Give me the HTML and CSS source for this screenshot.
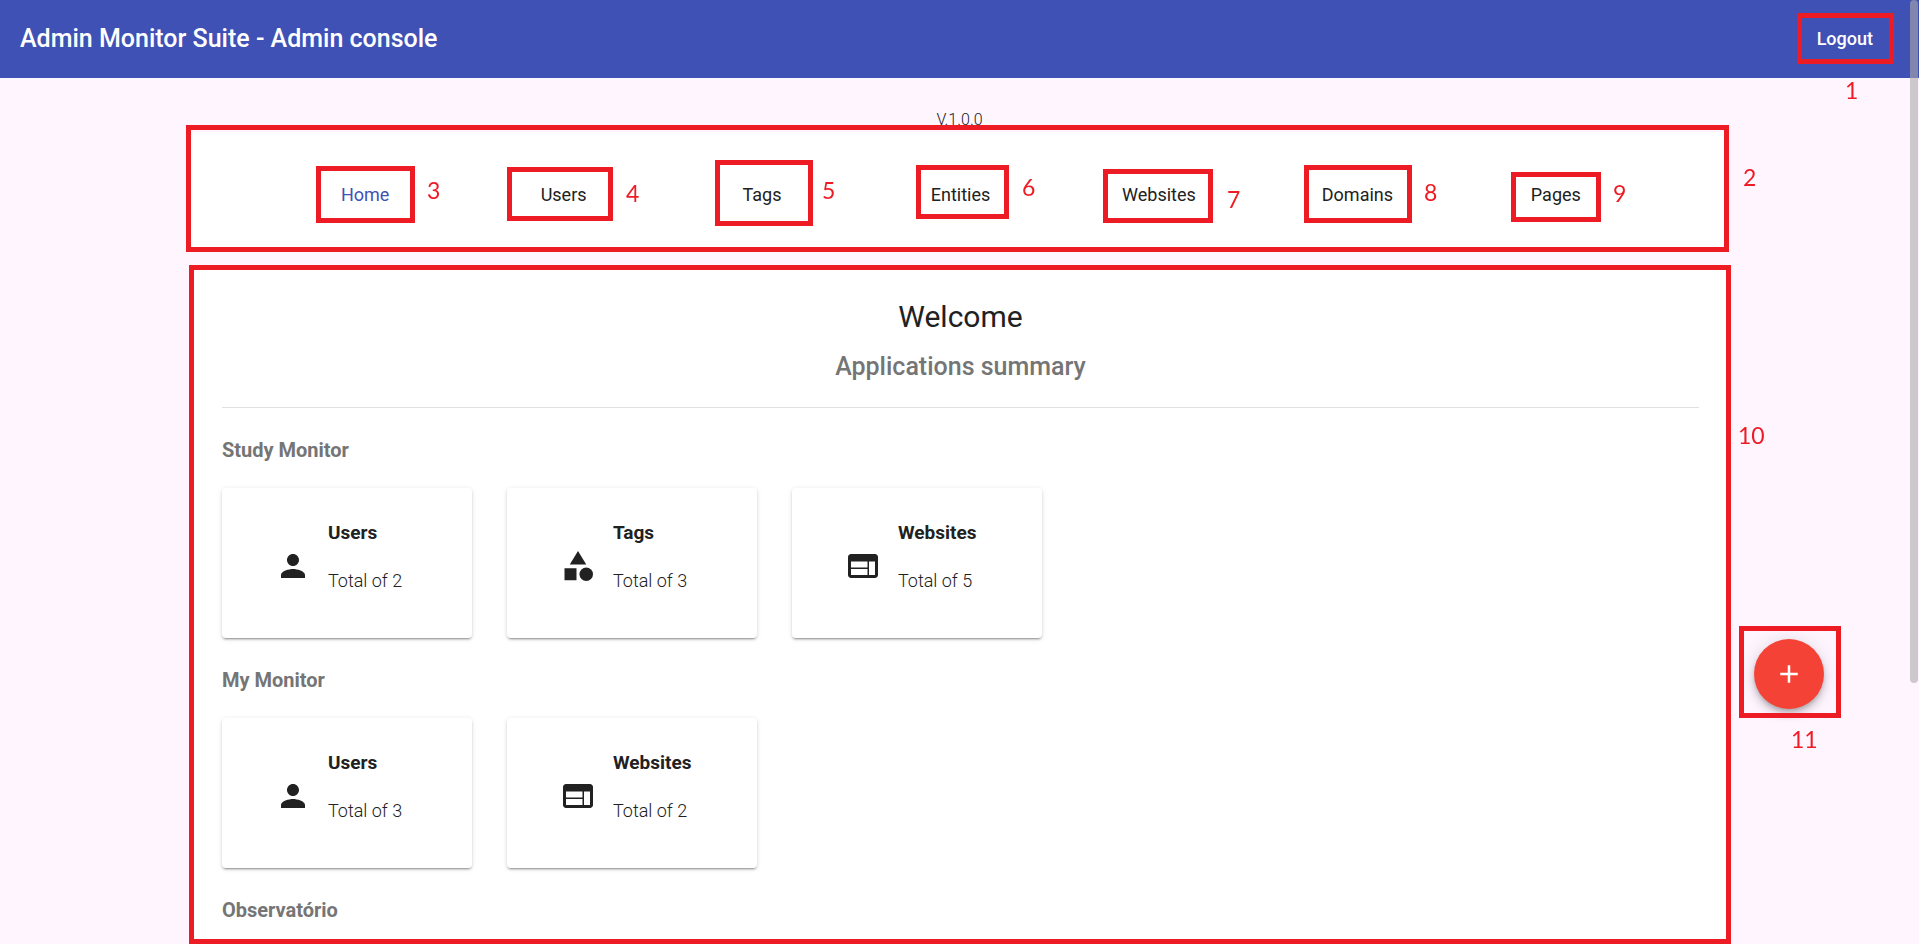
FILE: index.html
```
<!DOCTYPE html>
<html lang="en">
<head>
<meta charset="utf-8">
<meta name="viewport" content="width=device-width, initial-scale=1">
<title>Admin Monitor Suite - Admin console</title>
<link rel="stylesheet" href="styles.css">
</head>
<body>
<svg class="sprite" aria-hidden="true">
  <symbol id="person" viewBox="0 0 24 24"><path d="M12 12c2.210 0 4-1.790 4-4s-1.790-4-4-4-4 1.790-4 4 1.790 4 4 4zm0 2c-2.670 0-8 1.340-8 4v2h16v-2c0-2.660-5.330-4-8-4z"/></symbol>
  <symbol id="category" viewBox="0 0 24 24"><path d="M12 2l-5.500 9h11z"/><circle cx="17.500" cy="17.500" r="4.500"/><path d="M3 13.500h8v8H3z"/></symbol>
  <symbol id="web" viewBox="0 0 24 24"><path d="M20 4H4c-1.100 0-1.990.9-1.990 2L2 18c0 1.100.9 2 2 2h16c1.100 0 2-.9 2-2V6c0-1.100-.9-2-2-2zm-5 14H4v-4h11v4zm0-5H4V9h11v4zm5 5h-4V9h4v9z"/></symbol>
  <symbol id="add" viewBox="0 0 24 24"><path d="M19 13h-6v6h-2v-6H5v-2h6V5h2v6h6v2z"/></symbol>
</svg>

<header class="toolbar">
  <h1 class="toolbar-title">Admin Monitor Suite - Admin console</h1>
  <button class="logout" type="button">Logout</button>
</header>

<div class="page">
  <p class="version">V.1.0.0</p>
  <nav class="menu" aria-label="Main">
    <a class="menu-link active" href="#home">Home</a>
    <a class="menu-link" href="#users">Users</a>
    <a class="menu-link" href="#tags">Tags</a>
    <a class="menu-link" href="#entities">Entities</a>
    <a class="menu-link" href="#websites">Websites</a>
    <a class="menu-link" href="#domains">Domains</a>
    <a class="menu-link" href="#pages">Pages</a>
  </nav>

  <main class="summary">
    <div class="summary-head">
      <h2 class="welcome">Welcome</h2>
      <p class="subtitle">Applications summary</p>
    </div>

    <section class="app">
      <h3 class="app-name">Study Monitor</h3>
      <div class="cards">
        <article class="card">
          <svg class="card-icon"><use href="#person"/></svg>
          <div class="card-text"><h4 class="card-title">Users</h4><p class="card-total">Total of 2</p></div>
        </article>
        <article class="card">
          <svg class="card-icon"><use href="#category"/></svg>
          <div class="card-text"><h4 class="card-title">Tags</h4><p class="card-total">Total of 3</p></div>
        </article>
        <article class="card">
          <svg class="card-icon"><use href="#web"/></svg>
          <div class="card-text"><h4 class="card-title">Websites</h4><p class="card-total">Total of 5</p></div>
        </article>
      </div>
    </section>

    <section class="app">
      <h3 class="app-name">My Monitor</h3>
      <div class="cards">
        <article class="card">
          <svg class="card-icon"><use href="#person"/></svg>
          <div class="card-text"><h4 class="card-title">Users</h4><p class="card-total">Total of 3</p></div>
        </article>
        <article class="card">
          <svg class="card-icon"><use href="#web"/></svg>
          <div class="card-text"><h4 class="card-title">Websites</h4><p class="card-total">Total of 2</p></div>
        </article>
      </div>
    </section>

    <section class="app">
      <h3 class="app-name">Observatório</h3>
    </section>
  </main>
</div>

<button class="fab" type="button" aria-label="Add"><svg class="fab-icon"><use href="#add"/></svg></button>
<div class="scroll-thumb"></div>

<div class="notes">
  <div class="mark mark-1"></div><span class="num num-1">1</span>
  <div class="mark mark-2"></div><span class="num num-2">2</span>
  <div class="mark mark-3"></div><span class="num num-3">3</span>
  <div class="mark mark-4"></div><span class="num num-4">4</span>
  <div class="mark mark-5"></div><span class="num num-5">5</span>
  <div class="mark mark-6"></div><span class="num num-6">6</span>
  <div class="mark mark-7"></div><span class="num num-7">7</span>
  <div class="mark mark-8"></div><span class="num num-8">8</span>
  <div class="mark mark-9"></div><span class="num num-9">9</span>
  <div class="mark mark-10"></div><span class="num num-10">10</span>
  <div class="mark mark-11"></div><span class="num num-11">11</span>
</div>
</body>
</html>
```
FILE: styles.css
```
*, *::before, *::after { box-sizing: border-box; }

body {
  margin: 0;
  height: 100vh;
  overflow: hidden;
  display: flex;
  flex-direction: column;
  position: relative;
  background: #fff5ff;
  color: #212121;
  font-family: Roboto, "Liberation Sans", sans-serif;
  font-size: 18px;
  line-height: 24px;
}

h1, h2, h3, h4, p { margin: 0; }

.sprite { display: none; }

.toolbar {
  flex: none;
  display: flex;
  align-items: center;
  justify-content: space-between;
  padding: 23px 46px 23px 20px;
  background: #3f51b5;
  color: #fff;
}

.toolbar-title {
  font-size: 25px;
  line-height: 32px;
  font-weight: 500;
}

.logout {
  padding: 0;
  border: 0;
  background: none;
  color: inherit;
  font: inherit;
  font-weight: 500;
}

.page {
  flex: 1;
  display: flex;
  flex-direction: column;
  width: 80%;
  margin: 0 auto;
  padding-top: 30px;
}

.version {
  font-size: 16px;
  font-weight: 300;
  text-align: center;
}

.menu {
  display: grid;
  grid-template-columns: repeat(7, 1fr);
  padding: 51px 72px 41px 74px;
  background: #fff;
}

.menu-link {
  color: #212121;
  text-align: center;
  text-decoration: none;
}

.menu-link.active { color: #3f51b5; }

.summary {
  flex: 1;
  margin-top: 20px;
  padding: 29px 28px 0 30px;
  background: #fff;
}

.summary-head {
  padding-bottom: 24px;
  border-bottom: 1px solid #e0e0e0;
  text-align: center;
}

.welcome {
  font-size: 30px;
  line-height: 40px;
  font-weight: 400;
}

.subtitle {
  margin-top: 14px;
  color: #757575;
  font-size: 25px;
  line-height: 32px;
  font-weight: 500;
}

.app { padding-top: 29px; }

.app-name {
  color: #757575;
  font-size: 20px;
  line-height: 26px;
  font-weight: 700;
}

.cards {
  display: flex;
  flex-wrap: wrap;
  gap: 35px;
  padding-top: 25px;
}

.card {
  display: flex;
  align-items: center;
  gap: 17px;
  width: 250px;
  padding: 33px 16px 27px 53px;
  border-radius: 4px;
  background: #fff;
  box-shadow: 0 3px 1px -2px rgba(0, 0, 0, 0.2), 0 2px 2px 0 rgba(0, 0, 0, 0.14), 0 1px 5px 0 rgba(0, 0, 0, 0.12);
}

.card-icon {
  flex: none;
  width: 36px;
  height: 36px;
  fill: #212121;
}

.card-text { padding-bottom: 18px; }

.card-title {
  font-size: 19px;
  font-weight: 700;
}

.card-total {
  margin-top: 24px;
  font-weight: 300;
}

.fab {
  position: fixed;
  top: 639px;
  right: 95px;
  display: flex;
  align-items: center;
  justify-content: center;
  width: 70px;
  height: 70px;
  padding: 0;
  border: 0;
  border-radius: 50%;
  background: #f44336;
  box-shadow: 0 3px 5px -1px rgba(0, 0, 0, 0.2), 0 6px 10px 0 rgba(0, 0, 0, 0.14), 0 1px 18px 0 rgba(0, 0, 0, 0.12);
}

.fab-icon {
  width: 30px;
  height: 30px;
  fill: #fff;
}

.scroll-thumb {
  position: fixed;
  top: 0;
  right: 1px;
  width: 8px;
  height: 683px;
  border-radius: 4px;
  background: rgba(171, 170, 170, 0.6);
}

/* Numbered callouts drawn over the page */
.notes {
  position: absolute;
  inset: 0;
  pointer-events: none;
}

.mark {
  position: absolute;
  border: 5px solid #ed1c24;
}

.num {
  position: absolute;
  color: #ed1c24;
  font-family: Lato, "Liberation Sans", sans-serif;
  font-size: 23px;
  line-height: 24px;
}

.mark-1 { left: 1797px; top: 13px; width: 97px; height: 51px; }
.mark-2 { left: 186px; top: 125px; width: 1543px; height: 127px; }
.mark-3 { left: 316px; top: 166px; width: 99px; height: 57px; }
.mark-4 { left: 507px; top: 167px; width: 106px; height: 54px; }
.mark-5 { left: 715px; top: 160px; width: 98px; height: 66px; }
.mark-6 { left: 916px; top: 165px; width: 93px; height: 54px; }
.mark-7 { left: 1103px; top: 169px; width: 110px; height: 54px; }
.mark-8 { left: 1304px; top: 165px; width: 108px; height: 58px; }
.mark-9 { left: 1511px; top: 172px; width: 90px; height: 50px; }
.mark-10 { left: 189px; top: 265px; bottom: 0; width: 1542px; }
.mark-11 { left: 1739px; top: 626px; width: 102px; height: 92px; }

.num-1 { left: 1845px; top: 78px; }
.num-2 { left: 1743px; top: 165px; }
.num-3 { left: 427px; top: 178px; }
.num-4 { left: 626px; top: 181px; }
.num-5 { left: 822px; top: 178px; }
.num-6 { left: 1022px; top: 175px; }
.num-7 { left: 1227px; top: 187px; }
.num-8 { left: 1424px; top: 180px; }
.num-9 { left: 1613px; top: 181px; }
.num-10 { left: 1738px; top: 423px; }
.num-11 { left: 1791px; top: 727px; }
```
